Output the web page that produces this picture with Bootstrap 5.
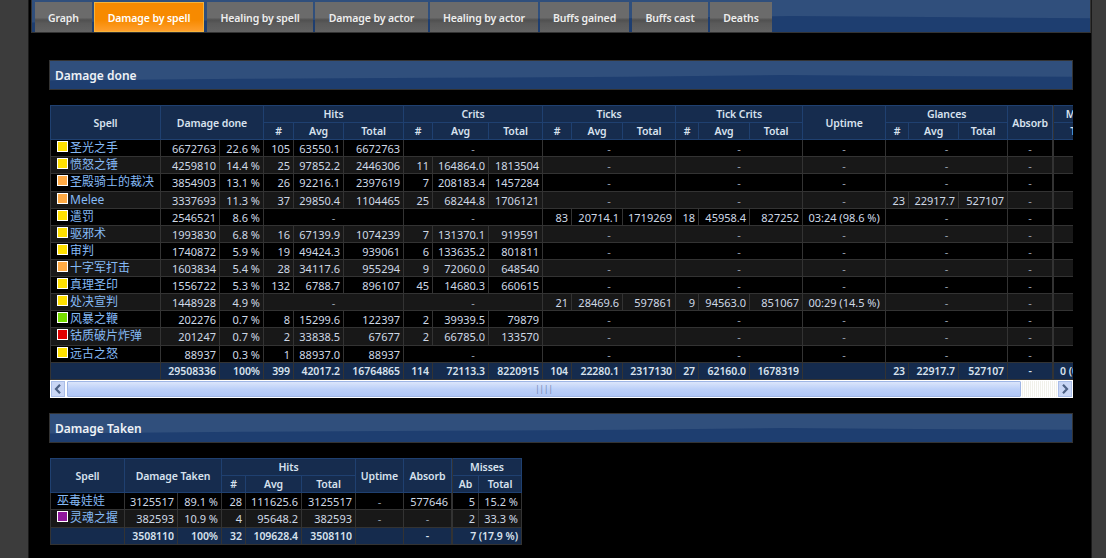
<!DOCTYPE html>
<html><head><meta charset="utf-8">
<link href="https://cdn.jsdelivr.net/npm/bootstrap@5.3.0/dist/css/bootstrap.min.css" rel="stylesheet">
<style>
html,body{height:558px;overflow:hidden}
body{background:#3c3c3c;font-family:"Noto Sans","Noto Sans CJK SC",sans-serif;font-size:11px;color:#d6dee8;margin:0}
.shell{margin-left:28px;width:1064px;height:558px;background:#000;border-left:1px solid #1a1a1a;border-right:1px solid #1a1a1a;padding:0 0 0 2px}
.wave{background-color:#1e3e70;background-image:url("data:image/svg+xml,%3Csvg xmlns='http://www.w3.org/2000/svg' width='1060' height='30' preserveAspectRatio='none'%3E%3Cpath d='M0 0H1060V17L900 16L760 15L600 17L400 18L200 19L0 21Z' fill='%23304f7c'/%3E%3C/svg%3E");background-size:100% 100%}
.topbar{height:33px;width:1060px;border:1px solid #333;border-top:0;padding:2px 4px 0 3px;gap:2px}
.tabitem{height:30px;background:linear-gradient(#6b6b6b 0 52%,#505050 60%,#5a5a5a 72%,#626262 100%);color:#eee;font-weight:600;font-size:10.5px;letter-spacing:-.1px;display:flex;align-items:center;justify-content:center;text-decoration:none;border:0;padding-top:3px}
.tabitem.on{background:linear-gradient(#f78a00 0 60%,#ffa030 100%);box-shadow:inset 0 0 0 1px #f5b43c;color:#fff}
.t1{width:57px}.t2{width:110px}.t3{width:106px;margin-left:1px}.t4{width:113px}.t5{width:108px}.t6{width:89px}.t7{width:76px;margin-left:1px}.t8{width:62px}
.sechead{margin-left:18px;width:1024px;height:30px;border:1px solid #333;font-size:12px;font-weight:600;color:#eef2f7;padding:1px 0 0 5px;display:flex;align-items:center}
.s1{margin-top:27px}.s2{margin-top:15px}
.clip{margin-left:19px;margin-top:15px;width:1023px;overflow:hidden}
.gridtable{table-layout:fixed;border-collapse:collapse;margin:0;width:auto;color:#d0dae6}
.gridtable th,.gridtable td{padding:1px 3px 0;height:17px;line-height:15px;font-size:11px;border:1px solid #333;text-align:right;white-space:nowrap;overflow:hidden;background:transparent;color:#cfd9e6}
.gridtable th{background:#162c4e;border-color:#1f4070;text-align:center;font-weight:600;font-size:10.5px;letter-spacing:-.1px;color:#d8e2ee;vertical-align:middle}
.gridtable thead tr:first-child th:not([rowspan]){padding-top:0}
.gridtable tbody tr:nth-child(odd) td{background:#000}
.gridtable tbody tr:nth-child(even) td{background:#181818}
.gridtable tbody tr.tall td{height:18px}
.gridtable tbody td.ctr{text-align:center;color:#9aa4b0}
.gridtable tbody td.ctr.val{color:#cfd9e6}
.gridtable tbody td.nm{text-align:left;padding:0 0 0 6px;color:#85baf5;font-size:12px}
.gridtable tbody td.gap,.gridtable tfoot td.gap,.gridtable th.gap{padding:0;background:#000!important;border-top:0;border-bottom:0;border-color:#333}
.gridtable tfoot td{background:#152b4d;font-weight:600;font-size:10.5px;letter-spacing:-.05px;border-color:#333;color:#d8e2ee}
.gridtable tfoot td.mis0{text-align:left;padding-left:6px}
.swatch{display:inline-block;width:11px;height:11px;border:1px solid #fff;vertical-align:0;margin-right:2px}
.sw-y{background:#ffe000}.sw-o{background:#ffaa44}.sw-g{background:#77dd00}.sw-r{background:#e00000}.sw-p{background:#90189c}
.fakebar{margin-left:19px;width:1023px;height:18px;background:#fff;padding:1px}
.sbtn{width:14px;height:16px;background:#c9d6f5;border:1px solid #a9bde8}
.sbtn svg{display:block;margin:2px auto 0}
.strack{flex:1;background:linear-gradient(#dbe5fb,#bcd0f8 50%,#b0c6f6);border:1px solid #9fb6e6;margin:0 0 0 2px;border-radius:1px;color:#6f84ad;font-size:8px;line-height:14px;text-align:center}
.srest{width:37px;background:repeating-linear-gradient(90deg,#fff 0 1px,#f1f1ea 1px 2px)}
</style></head><body>
<div class="shell">
<div class="wave topbar d-flex">
<a class="tabitem t1">Graph</a><a class="tabitem on t2">Damage by spell</a><a class="tabitem t3">Healing by spell</a><a class="tabitem t4">Damage by actor</a><a class="tabitem t5">Healing by actor</a><a class="tabitem t6">Buffs gained</a><a class="tabitem t7">Buffs cast</a><a class="tabitem t8">Deaths</a>
</div>
<div class="wave sechead s1">Damage done</div>
<div class="clip" id="c1"></div>
<div class="fakebar d-flex"><div class="sbtn"><svg width="8" height="10" viewBox="0 0 8 10"><path d="M6 .8 2 5l4 4.2" fill="none" stroke="#4d6185" stroke-width="2.2"/></svg></div><div class="strack">||||</div><div class="srest"></div><div class="sbtn"><svg width="8" height="10" viewBox="0 0 8 10"><path d="M2 .8 6 5 2 9.200" fill="none" stroke="#4d6185" stroke-width="2.2"/></svg></div></div>
<div class="wave sechead s2">Damage Taken</div>
<div class="clip" id="c2"></div>
</div>
<script>
const Y='y',O='o',G='g',R='r',P='p';
const rows=[
[Y,'圣光之手','6672763','22.6 %',[105,'63550.1','6672763'],0,0,0,'-',0,'-'],
[Y,'愤怒之锤','4259810','14.4 %',[25,'97852.2','2446306'],[11,'164864.0','1813504'],0,0,'-',0,'-'],
[O,'圣殿骑士的裁决','3854903','13.1 %',[26,'92216.1','2397619'],[7,'208183.4','1457284'],0,0,'-',0,'-'],
[O,'Melee','3337693','11.3 %',[37,'29850.4','1104465'],[25,'68244.8','1706121'],0,0,'-',[23,'22917.7','527107'],'-'],
[Y,'遣罚','2546521','8.6 %',0,0,[83,'20714.1','1719269'],[18,'45958.4','827252'],'03:24 (98.6 %)',0,'-'],
[Y,'驱邪术','1993830','6.8 %',[16,'67139.9','1074239'],[7,'131370.1','919591'],0,0,'-',0,'-'],
[Y,'审判','1740872','5.9 %',[19,'49424.3','939061'],[6,'133635.2','801811'],0,0,'-',0,'-'],
[O,'十字军打击','1603834','5.4 %',[28,'34117.6','955294'],[9,'72060.0','648540'],0,0,'-',0,'-'],
[Y,'真理圣印','1556722','5.3 %',[132,'6788.7','896107'],[45,'14680.3','660615'],0,0,'-',0,'-'],
[Y,'处决宣判','1448928','4.9 %',0,0,[21,'28469.6','597861'],[9,'94563.0','851067'],'00:29 (14.5 %)',0,'-'],
[G,'风暴之鞭','202276','0.7 %',[8,'15299.6','122397'],[2,'39939.5','79879'],0,0,'-',0,'-'],
[R,'钴质破片炸弹','201247','0.7 %',[2,'33838.5','67677'],[2,'66785.0','133570'],0,0,'-',0,'-'],
[Y,'远古之怒','88937','0.3 %',[1,'88937.0','88937'],0,0,0,'-',0,'-']];
const tri=t=>t?`<td>${t[0]}</td><td>${t[1]}</td><td>${t[2]}</td>`:`<td colspan="3" class="ctr">-</td>`;
const sub='<th>#</th><th>Avg</th><th>Total</th>';
const cols=w=>`<colgroup>${w.map(x=>`<col style="width:${x}px">`).join('')}</colgroup>`;
const sum=w=>w.reduce((a,b)=>a+b);
const w=[110,59,44,30,50,60,29,56,54,29,51,53,23,51,53,83,23,50,49,45,1,58];
let h=`<table class="table gridtable" style="width:${sum(w)}px">${cols(w)}<thead>
<tr><th rowspan="2">Spell</th><th rowspan="2" colspan="2">Damage done</th><th colspan="3">Hits</th><th colspan="3">Crits</th><th colspan="3">Ticks</th><th colspan="3">Tick Crits</th><th rowspan="2">Uptime</th><th colspan="3">Glances</th><th rowspan="2">Absorb</th><th rowspan="2" class="gap"></th><th>Misses</th></tr>
<tr>${sub+sub+sub+sub+sub}<th>Total</th></tr></thead><tbody>`;
rows.forEach((r,i)=>{h+=`<tr class="${i==2||i==11?'tall':''}"><td class="nm"><span class="swatch sw-${r[0]}"></span>${r[1]}</td><td>${r[2]}</td><td>${r[3]}</td>${tri(r[4])}${tri(r[5])}${tri(r[6])}${tri(r[7])}<td class="ctr ${r[8]!='-'?'val':''}">${r[8]}</td>${tri(r[9])}<td class="ctr">-</td><td class="gap"></td><td></td></tr>`;});
h+=`</tbody><tfoot><tr><td></td><td>29508336</td><td>100%</td><td>399</td><td>42017.2</td><td>16764865</td><td>114</td><td>72113.3</td><td>8220915</td><td>104</td><td>22280.1</td><td>2317130</td><td>27</td><td>62160.0</td><td>1678319</td><td></td><td>23</td><td>22917.7</td><td>527107</td><td class="text-center">-</td><td class="gap"></td><td class="mis0">0 (0 %)</td></tr></tfoot></table>`;
document.getElementById('c1').innerHTML=h;
const w2=[74,53,44,24,56,54,48,48,1,26,43];
const r2=[['','巫毒娃娃','3125517','89.1 %','28','111625.6','3125517','-','577646','5','15.2 %'],[P,'灵魂之握','382593','10.9 %','4','95648.2','382593','-','-','2','33.3 %']];
let g=`<table class="table gridtable" style="width:${sum(w2)}px">${cols(w2)}<thead><tr><th rowspan="2">Spell</th><th rowspan="2" colspan="2">Damage Taken</th><th colspan="3">Hits</th><th rowspan="2">Uptime</th><th rowspan="2">Absorb</th><th rowspan="2" class="gap"></th><th colspan="2">Misses</th></tr><tr>${sub}<th>Ab</th><th>Total</th></tr></thead><tbody>`;
r2.forEach((r,i)=>{g+=`<tr class="${i==1?'tall':''}"><td class="nm">${r[0]?`<span class="swatch sw-${r[0]}"></span>`:''}${r[1]}</td><td>${r[2]}</td><td>${r[3]}</td><td>${r[4]}</td><td>${r[5]}</td><td>${r[6]}</td><td class="ctr">${r[7]}</td><td class="${r[8]=='-'?'ctr':''}">${r[8]}</td><td class="gap"></td><td>${r[9]}</td><td>${r[10]}</td></tr>`;});
g+=`</tbody><tfoot><tr><td></td><td>3508110</td><td>100%</td><td>32</td><td>109628.4</td><td>3508110</td><td></td><td class="text-center">-</td><td class="gap"></td><td colspan="2">7 (17.9 %)</td></tr></tfoot></table>`;
document.getElementById('c2').innerHTML=g;
</script>
</body></html>
